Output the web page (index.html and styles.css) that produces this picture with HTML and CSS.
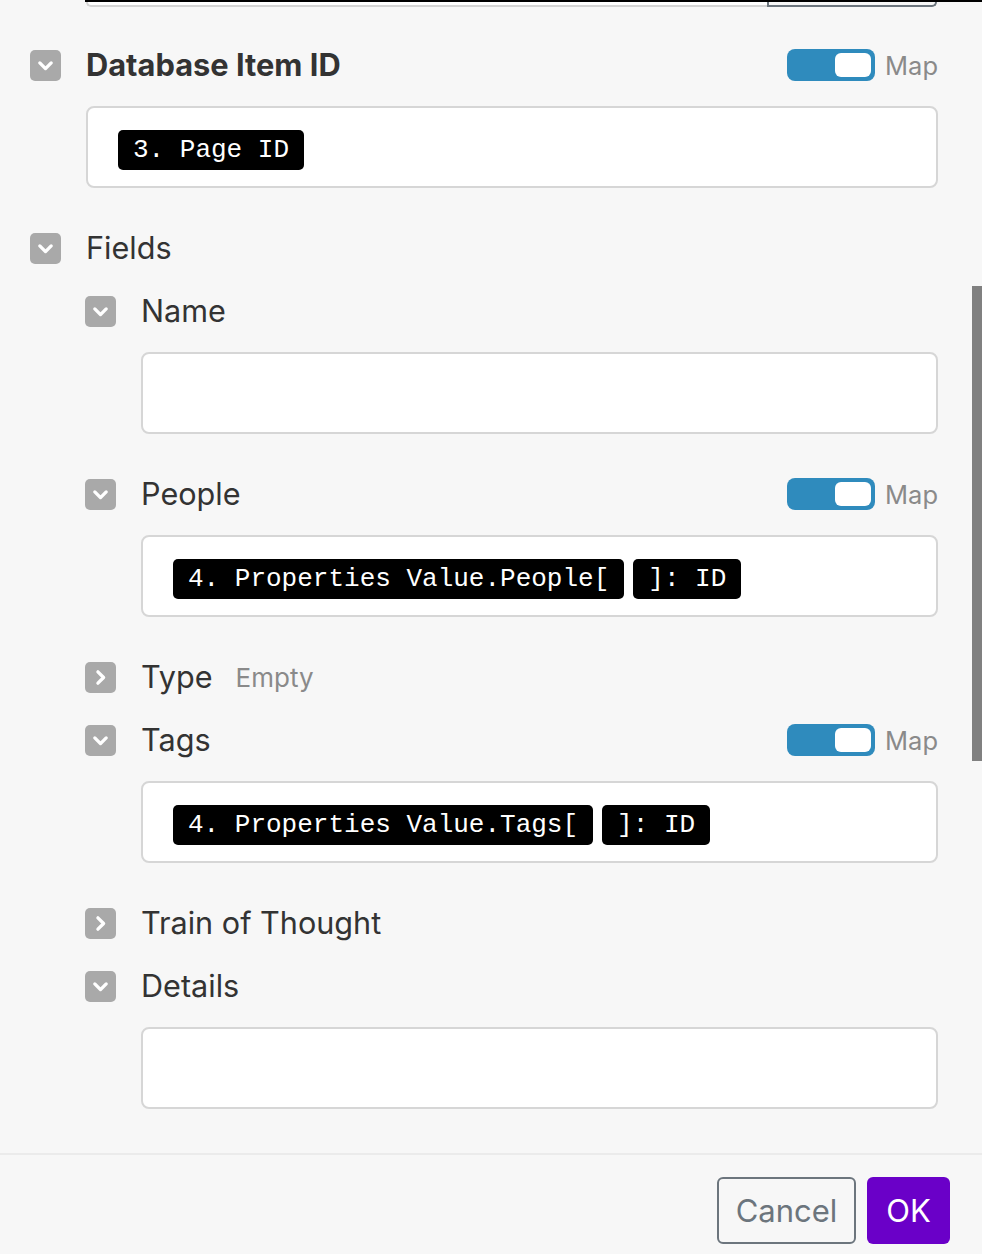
FILE: index.html
```html
<!DOCTYPE html>
<html>
<head>
<meta charset="utf-8">
<link rel="stylesheet" href="styles.css">
</head>
<body>
<div class="panel">
  <div class="top-strip"></div>
  <div class="top-clip">
    <div class="top-input"></div>
    <div class="top-btn"></div>
  </div>

  <div class="content">
    <div class="field">
      <div class="row">
        <span class="chev down"><svg viewBox="0 0 30 30"><path d="M9.5 12.5 L15 18 L20.5 12.5"/></svg></span>
        <span class="label bold">Database Item ID</span>
        <span class="map"><span class="toggle"><span class="knob"></span></span><span class="map-text">Map</span></span>
      </div>
      <div class="input"><span class="chip">3. Page ID</span></div>
    </div>

    <div class="field">
      <div class="row">
        <span class="chev down"><svg viewBox="0 0 30 30"><path d="M9.5 12.5 L15 18 L20.5 12.5"/></svg></span>
        <span class="label">Fields</span>
      </div>
      <div class="children">
        <div class="field">
          <div class="row">
            <span class="chev down"><svg viewBox="0 0 30 30"><path d="M9.5 12.5 L15 18 L20.5 12.5"/></svg></span>
            <span class="label">Name</span>
          </div>
          <div class="input"></div>
        </div>

        <div class="field">
          <div class="row">
            <span class="chev down"><svg viewBox="0 0 30 30"><path d="M9.5 12.5 L15 18 L20.5 12.5"/></svg></span>
            <span class="label">People</span>
            <span class="map"><span class="toggle"><span class="knob"></span></span><span class="map-text">Map</span></span>
          </div>
          <div class="input"><span class="chip">4. Properties Value.People[</span><span class="chip">]: ID</span></div>
        </div>

        <div class="field">
          <div class="row">
            <span class="chev right"><svg viewBox="0 0 30 30"><path d="M12.5 9.5 L18 15 L12.5 20.5"/></svg></span>
            <span class="label">Type</span>
            <span class="empty">Empty</span>
          </div>
        </div>

        <div class="field">
          <div class="row">
            <span class="chev down"><svg viewBox="0 0 30 30"><path d="M9.5 12.5 L15 18 L20.5 12.5"/></svg></span>
            <span class="label">Tags</span>
            <span class="map"><span class="toggle"><span class="knob"></span></span><span class="map-text">Map</span></span>
          </div>
          <div class="input"><span class="chip">4. Properties Value.Tags[</span><span class="chip">]: ID</span></div>
        </div>

        <div class="field">
          <div class="row">
            <span class="chev right"><svg viewBox="0 0 30 30"><path d="M12.5 9.5 L18 15 L12.5 20.5"/></svg></span>
            <span class="label">Train of Thought</span>
          </div>
        </div>

        <div class="field">
          <div class="row">
            <span class="chev down"><svg viewBox="0 0 30 30"><path d="M9.5 12.5 L15 18 L20.5 12.5"/></svg></span>
            <span class="label">Details</span>
          </div>
          <div class="input"></div>
        </div>
      </div>
    </div>
  </div>

  <div class="footer">
    <button class="btn cancel">Cancel</button>
    <button class="btn ok">OK</button>
  </div>

  <div class="scrollbar"></div>
</div>
</body>
</html>
```

FILE: styles.css
```css
html, body {
  margin: 0;
  padding: 0;
  background: #f7f7f7;
}
body {
  font-family: Inter, "Noto Sans", sans-serif;
  color: #333333;
  width: 982px;
  height: 1254px;
  overflow: hidden;
}
.panel {
  position: relative;
  width: 982px;
  height: 1254px;
}
.top-strip {
  height: 2px;
  margin-left: 85px;
  background: #000;
}
.top-clip {
  display: flex;
  height: 5px;
  padding-left: 86px;
}
.top-input {
  width: 681px;
  box-sizing: border-box;
  background: #fff;
  border: 2px solid #d4d4d4;
  border-top: none;
  border-right: none;
  border-radius: 0 0 0 8px;
}
.top-btn {
  width: 170px;
  box-sizing: border-box;
  border: 2px solid #6c757d;
  border-top: none;
  border-radius: 0 0 8px 0;
}
.content {
  padding: 42px 44px 0 30px;
  height: 1146px;
  box-sizing: border-box;
}
.field {
  margin-bottom: 31px;
}
.field:last-child {
  margin-bottom: 0;
}
.field:has(> .input) {
  margin-bottom: 0;
}
.children {
  margin-top: 31px;
  padding-left: 55px;
}
.row {
  display: flex;
  align-items: center;
  height: 32px;
}
.chev {
  width: 31px;
  height: 31px;
  border-radius: 5px;
  background: #a9a9a9;
  flex: none;
  display: flex;
}
.chev svg {
  width: 31px;
  height: 31px;
}
.chev path {
  fill: none;
  stroke: #fff;
  stroke-width: 3.2;
  stroke-linecap: round;
  stroke-linejoin: round;
}
.label {
  margin-left: 25px;
  font-size: 30.6px;
  color: #333;
  line-height: 32px;
}
.label.bold {
  font-weight: 700;
  font-size: 30.8px;
}
.empty {
  margin-left: 23px;
  font-size: 26px;
  color: #8a8a8a;
}
.map {
  margin-left: auto;
  display: flex;
  align-items: center;
}
.toggle {
  width: 88px;
  height: 32px;
  box-sizing: border-box;
  border-radius: 8px;
  background: #2f8bbd;
  display: flex;
  justify-content: flex-end;
  align-items: center;
  padding-right: 4px;
}
.knob {
  width: 36px;
  height: 24px;
  border-radius: 6px;
  background: #fff;
}
.map-text {
  margin-left: 10px;
  font-size: 25.5px;
  color: #8a8a8a;
}
.input {
  margin-top: 25px;
  margin-left: 56px;
  height: 82px;
  box-sizing: border-box;
  background: #fff;
  border: 2px solid #d6d6d6;
  border-radius: 8px;
  padding: 22px 30px;
  display: flex;
  align-items: flex-start;
  gap: 9px;
  margin-bottom: 44px;
}
.field:last-child > .input {
  margin-bottom: 0;
}
.chip {
  background: #000;
  color: #fff;
  font-family: "Liberation Mono", "Courier New", monospace;
  font-size: 26px;
  height: 40px;
  line-height: 40px;
  padding: 0 15px;
  border-radius: 5px;
  white-space: pre;
}
.footer {
  border-top: 2px solid #ebebeb;
  display: flex;
  justify-content: flex-end;
  gap: 11px;
  padding: 22px 32px 0 0;
}
.btn {
  height: 67px;
  box-sizing: border-box;
  border-radius: 6px;
  font-family: Inter, "Noto Sans", sans-serif;
  font-size: 31px;
  padding: 0;
}
.cancel {
  width: 139px;
  background: transparent;
  border: 2px solid #6c757d;
  color: #6c757d;
}
.ok {
  width: 83px;
  background: #6a00c8;
  border: none;
  color: #fff;
}
.scrollbar {
  position: absolute;
  left: 972px;
  top: 286px;
  width: 10px;
  height: 475px;
  background: #808080;
}
```
